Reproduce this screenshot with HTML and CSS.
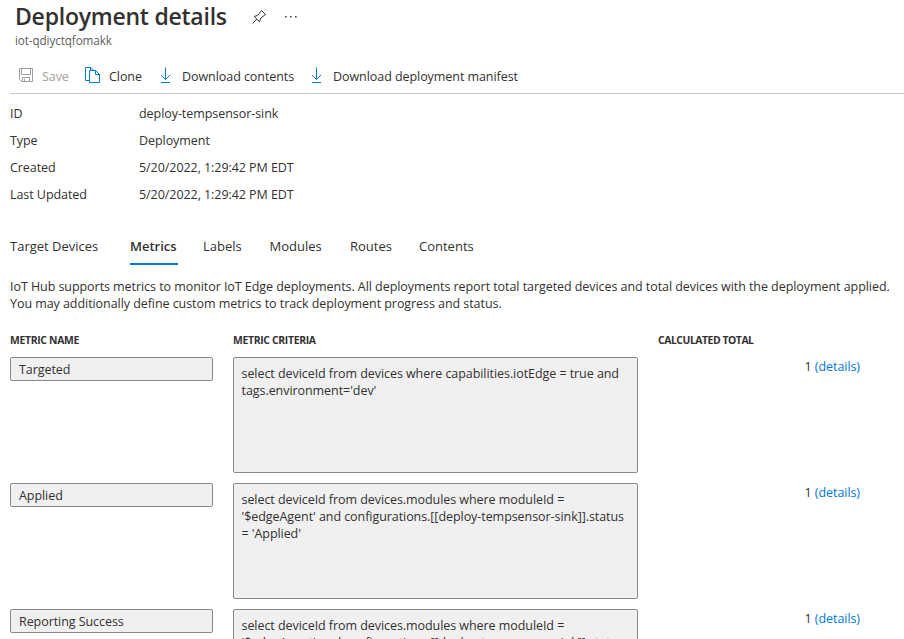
FILE: index.html
```html
<!DOCTYPE html>
<html lang="en">
<head>
<meta charset="utf-8">
<title>Deployment details</title>
<link rel="stylesheet" href="styles.css">
</head>
<body>
<header class="head">
  <div class="title-row">
    <h1 class="title">Deployment details</h1>
    <svg class="pin" width="16" height="16" viewBox="0 0 16 16" fill="none" stroke="#323130" stroke-width="1"><path d="M1.500 14.500 5.800 10.200M3.200 7.500 8.500 12.800 9.700 9.200 14.500 5.500 10.500 1.500 6.800 6.300Z"/></svg>
    <svg class="more" width="14" height="4" viewBox="0 0 14 4" fill="#444"><path d="M0 1h1.600v1.500H0zM5 1h1.600v1.500H5zM10 1h1.600v1.500H10z"/></svg>
  </div>
  <div class="subtitle">iot-qdiyctqfomakk</div>
</header>
<nav class="toolbar">
  <button class="command save" disabled><svg width="15" height="15" viewBox="0 0 15 15" fill="none" stroke="#a19f9d"><path d="M.5.5h13v13H2.8L.5 11.2ZM2.5.5v6h9v-6M3.5 13.5v-4h7v4M5.5 11v2.5"/></svg><span>Save</span></button>
  <button class="command clone"><svg width="16" height="17" viewBox="0 0 16 17" fill="none" stroke="#0078d4"><path d="M4.500 13.500H.5V.5h5.300l3 3M4.500 3.500h6l4 4v8h-10ZM10.500 3.500v4h4M5.500.500v3"/></svg><span>Clone</span></button>
  <button class="command download"><svg width="12" height="17" viewBox="0 0 12 17" fill="none" stroke="#0078d4"><path d="M5.500.500v12M1 8l4.500 4.500L10 8M1 15.500h9"/></svg><span>Download contents</span></button>
  <button class="command manifest"><svg width="12" height="17" viewBox="0 0 12 17" fill="none" stroke="#0078d4"><path d="M5.500.500v12M1 8l4.500 4.500L10 8M1 15.500h9"/></svg><span>Download deployment manifest</span></button>
</nav>
<main class="content">
  <dl class="properties">
    <dt>ID</dt><dd>deploy-tempsensor-sink</dd>
    <dt>Type</dt><dd>Deployment</dd>
    <dt>Created</dt><dd>5/20/2022, 1:29:42 PM EDT</dd>
    <dt>Last Updated</dt><dd>5/20/2022, 1:29:42 PM EDT</dd>
  </dl>
  <nav class="tabs">
    <span class="tab">Target Devices</span><span class="tab active">Metrics</span><span class="tab">Labels</span><span class="tab">Modules</span><span class="tab">Routes</span><span class="tab">Contents</span>
  </nav>
  <p class="intro">IoT Hub supports metrics to monitor IoT Edge deployments. All deployments report total targeted devices and total devices with the deployment applied.<br>You may additionally define custom metrics to track deployment progress and status.</p>
  <section class="metrics">
    <div class="metric heading"><span>METRIC NAME</span><span>METRIC CRITERIA</span><span class="total-heading">CALCULATED TOTAL</span></div>
    <div class="metric"><div class="name">Targeted</div><div class="criteria">select deviceId from devices where capabilities.iotEdge = true and<br>tags.environment='dev'</div><div class="total">1 <a>(details)</a></div></div>
    <div class="metric"><div class="name">Applied</div><div class="criteria">select deviceId from devices.modules where moduleId =<br>'$edgeAgent' and configurations.[[deploy-tempsensor-sink]].status<br>= 'Applied'</div><div class="total">1 <a>(details)</a></div></div>
    <div class="metric"><div class="name">Reporting Success</div><div class="criteria">select deviceId from devices.modules where moduleId =<br>'$edgeAgent' and configurations.[[deploy-tempsensor-sink]].status</div><div class="total">1 <a>(details)</a></div></div>
  </section>
</main>
</body>
</html>
```
FILE: styles.css
```css
* { box-sizing: border-box; }
body {
  margin: 0;
  height: 639px;
  overflow: hidden;
  background: #fff;
  color: #323130;
  font: 12.5px/17px "Open Sans", "Noto Sans", sans-serif;
  letter-spacing: -0.06px;
  white-space: nowrap;
}
.head { height: 58px; padding-left: 15px; }
.title-row { display: flex; align-items: center; height: 33px; }
.title { margin: 0; width: 236px; font-size: 23px; line-height: 33px; font-weight: 600; letter-spacing: -0.24px; }
.more { margin-left: 18px; }
.subtitle { margin-top: -1px; color: #605e5c; font-size: 11.7px; line-height: 17px; letter-spacing: -0.1px; }
.toolbar {
  display: grid;
  grid-template-columns: 66px 75px 151px auto;
  height: 36px;
  margin-left: 10px;
  padding-left: 9px;
  border-bottom: 1px solid #c8c6c4;
}
.command {
  display: flex;
  align-items: center;
  height: 35px;
  padding: 0;
  border: 0;
  background: none;
  color: inherit;
  font: inherit;
  letter-spacing: inherit;
}
.command span { padding-top: 1px; }
.save { color: #a19f9d; gap: 8px; }
.clone { gap: 8px; }
.download, .manifest { gap: 10px; }
.content { padding-left: 10px; }
.properties {
  display: grid;
  grid-template-columns: 129px auto;
  grid-auto-rows: 27px;
  margin: 6px 0 0;
  line-height: 27px;
}
.properties dd { margin: 0; }
.tabs {
  display: grid;
  grid-template-columns: 120px 73px 66.5px 80.5px 69px auto;
  height: 39px;
  margin-top: 18px;
  font-size: 13px;
  line-height: 40px;
  letter-spacing: 0;
}
.active { width: 48px; height: 39px; font-weight: 600; border-bottom: 2px solid #0078d4; }
.intro { margin: 13px 0 0; }
.metrics { margin-top: 20px; }
.metric {
  display: grid;
  grid-template-columns: 203px 405px 202px;
  column-gap: 20px;
  height: 126px;
  align-items: start;
}
.heading { height: 25px; font-size: 10.4px; font-weight: 700; letter-spacing: -0.32px; }
.total-heading { letter-spacing: -0.45px; }
.name, .criteria { border: 1px solid #8a8886; border-radius: 2px; background: #f0f0f0; }
.name { height: 24px; padding-left: 8px; line-height: 23px; }
.criteria { height: 116px; padding: 7px 7px 7px 7.5px; overflow: hidden; }
.total { text-align: right; padding-top: 1px; }
.total a { color: #0078d4; }
```
